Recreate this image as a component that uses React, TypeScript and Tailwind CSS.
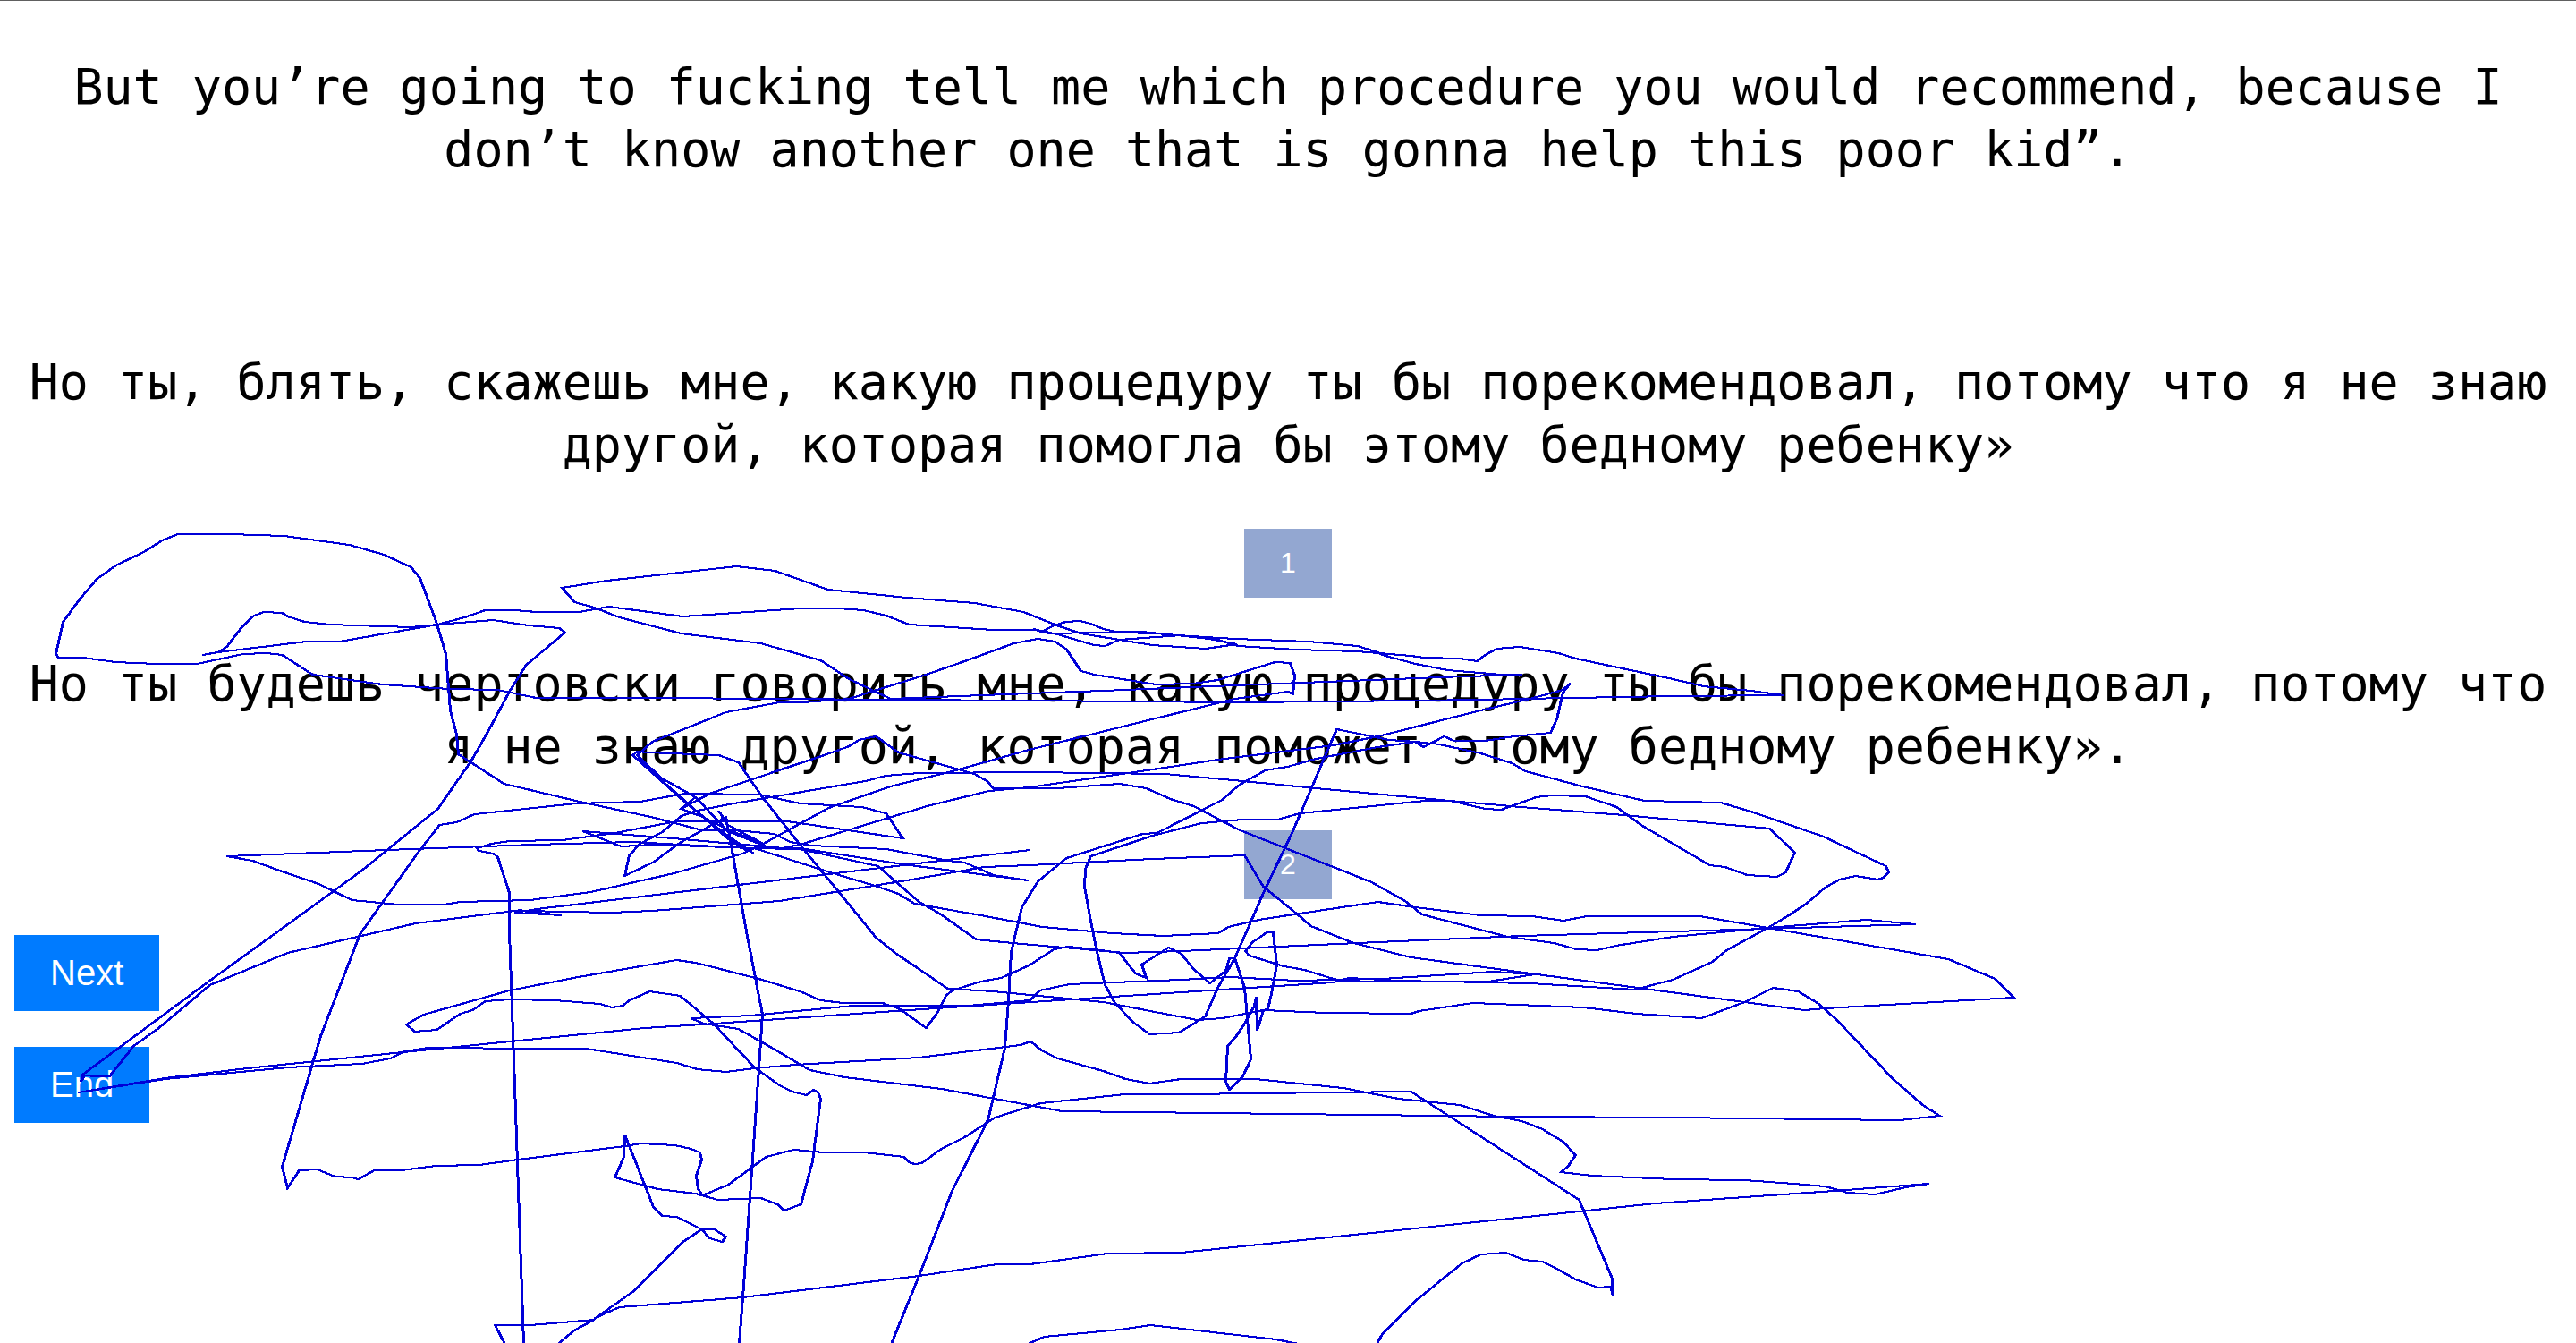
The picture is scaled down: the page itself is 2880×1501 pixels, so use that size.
const STROKES: string[] = [
  "226,731 243,728 342,716 379,716 489,697 519,689 542,681 574,681 600,683 647,683 680,677 763,688 894,679 937,679 965,681 990,687 1016,697 1110,703 1158,703 1173,707 1223,706 1276,705 1315,709 1347,711 1380,713 1462,716 1517,721 1540,728 1545,731 1582,741 1618,748 1678,753 1701,753 1609,756 1380,765 1233,771 1150,774 995,780 949,758 917,737 850,718 761,707 692,689 664,678 642,672 628,656 678,648 823,632 866,637 925,658 1013,667 1089,673 1144,683 1181,698 1208,707 1257,715 1288,720 1347,724 1382,719 1352,713 1320,709 1251,714 1235,721 1223,720 1182,708 1159,703",
  "1155,702 1164,705 1178,698 1191,694 1207,693 1219,696 1233,702 1251,706 1292,707 1315,709 1361,714 1384,721 1448,725 1517,727 1577,732 1591,734 1632,735 1651,738 1660,731 1673,724 1699,722 1742,729 1761,735 1870,758 1904,766 1957,771 1994,776 1870,777 1700,780 1660,781 1494,783 1380,784 1150,782 995,781 870,780 720,779 599,779 556,770 501,769 427,764 349,753 315,731 298,729 271,730 220,741 174,741 129,739 92,734 65,734 62,730 70,694 90,667 108,646 129,631 160,616 181,603 198,596 257,596 317,598 390,608 429,619 459,633 469,645 487,693 498,730 503,793 510,820 512,842 563,875 643,894 727,912 785,927 823,927 865,931 883,940 907,944 990,948 1060,961 1078,963 1110,977 1149,983",
  "1149,983 1009,965 894,947 876,947 752,936 651,928 694,945 729,943 841,947 894,948 981,967 1027,1007 1050,1020 1091,1049 1142,1054 1224,1061 1256,1064 1320,1062 1517,1053 1701,1045 1870,1040 1976,1037 2141,1032 2086,1027 1976,1036 1870,1046 1806,1056 1785,1061 1762,1060 1737,1053 1685,1046 1589,1021 1572,1007 1533,985 1490,968 1386,927 1334,900 1308,892 1281,880 1251,875 1182,880 1110,880 1103,872 1089,864 1068,858 1036,849 1004,840 979,822 960,826 949,833 921,843 876,858 793,886 761,903 785,912 813,926 840,937 852,943",
  "777,890 761,903",
  "842,953 813,933 767,897 707,843 712,839 723,840 803,843 825,851 852,890 897,947 957,1020 979,1047 1003,1066 1027,1082 1059,1104 1110,1107 1233,1119 1338,1139 1366,1137 1412,1128 1481,1131 1577,1132 1586,1129 1646,1120 1770,1125 1829,1132 1902,1137 1950,1119 1982,1103 2010,1107 2033,1121 2054,1140 2115,1204 2149,1234 2168,1246 2124,1251 2035,1250 1870,1248 1692,1247 1187,1241 1052,1216 944,1203 905,1195 857,1167 825,1149 786,1143 772,1137 839,1134 954,1123 1082,1123 1151,1117 1162,1106 1195,1099 1320,1094 1375,1091 1448,1095 1545,1093 1669,1085 1715,1088 1664,1096 1508,1096 1490,1093 1458,1083 1435,1079 1396,1067 1392,1062 1400,1052 1416,1041 1423,1041 1427,1077 1421,1110 1417,1127 1412,1128 1405,1151 1404,1113 1402,1123 1391,1143 1381,1158 1372,1168 1370,1208 1374,1217 1389,1202 1398,1183 1391,1103 1380,1070 1374,1070 1370,1084 1352,1098 1334,1082 1320,1065 1306,1058 1276,1077 1281,1092 1269,1087 1251,1064 1224,1060 1194,1057 1178,1060 1150,1078 1119,1092 1096,1096 1064,1106 1057,1112 1048,1130 1035,1148 1006,1127 986,1120 942,1120 917,1117 894,1107 848,1093 777,1075 756,1072 646,1091 600,1100 569,1106 473,1133 454,1144 463,1152 488,1150 514,1132 528,1128 542,1118 569,1116 620,1117 670,1121 684,1125 696,1123 703,1117 726,1107 760,1112 797,1143 843,1192 871,1212 885,1219 901,1223 909,1217 914,1220 917,1227 908,1297 895,1345 876,1352 869,1345 850,1338 802,1340 777,1333 735,1328 687,1315 697,1292 698,1267 730,1348 740,1358 756,1359 784,1373 793,1383 807,1387 811,1381 798,1373 784,1373 763,1387 708,1442 664,1473 676,1467 692,1460 830,1449 1027,1425 1114,1412 1151,1412 1238,1400 1320,1399 1765,1353 1850,1344 2050,1330 2156,1322 2130,1326 2096,1334 2065,1332 2040,1325 2005,1322 1950,1318 1870,1317 1779,1313 1745,1309 1753,1302 1761,1290 1747,1275 1724,1261 1701,1252 1669,1246 1632,1234 1563,1227 1501,1215 1403,1205 1320,1205 1285,1210 1258,1205 1233,1196 1182,1182 1164,1173 1152,1163 1140,1167 1027,1181 889,1189 843,1193 811,1197 779,1194 756,1187 655,1171 600,1171 478,1170 452,1174 436,1182 404,1188 321,1192 184,1205 87,1220 184,1204 276,1193 450,1175 720,1148 784,1144 1000,1129 1320,1108 1490,1097 1508,1092 1563,1095 1710,1098 1827,1105 1870,1094 1914,1074 1930,1061 1976,1036 1998,1023 2019,1009 2040,991 2056,982 2074,978 2099,982 2105,980 2111,974 2108,967 2038,934 1957,906 1923,896 1838,894 1769,878 1705,861 1690,852 1655,841 1609,831 1582,828 1540,834 1471,847 1439,856 1414,860 1384,877 1366,893 1293,930 1277,931 1192,958 1160,984 1142,1013 1130,1063 1127,1117 1123,1170 1105,1247 1101,1257 1064,1330 1027,1425 996,1501",
  "1755,763 1747,770 1710,780 1655,793 1540,822 1490,832 1361,848 1302,857 1150,879 1105,883 1036,900 894,943 868,948 853,944 813,928 803,917 777,890 738,868 712,843 729,828 811,795 871,784 898,784 949,780 977,771 1032,754 1078,738 1133,718 1160,713 1179,716 1192,725 1208,749 1223,753 1292,764 1334,763 1361,759 1425,739 1442,740 1447,754 1445,775 1440,772 1380,780 1352,787 1150,837 1068,860 995,878 926,902 853,942 830,953 753,975 660,996 592,1005 514,1007 496,1010 445,1010 393,1005 356,987 312,972 282,961 253,956 432,949 597,943 707,940 760,943 843,947 921,972 981,990 1004,998 1022,1009 1096,1022 1165,1035 1243,1042 1300,1045 1361,1042 1373,1035 1407,1027 1453,1020 1540,1007 1582,1013 1655,1022 1713,1023 1747,1028 1774,1023 1900,1023 1976,1036 2178,1071 2230,1093 2251,1114 2040,1126 2017,1128 1950,1119 1718,1088 1577,1069 1513,1053 1465,1034 1449,1020 1412,990 1391,955 1288,959 1150,966 1100,968 1013,983 871,1006 729,1017 683,1019 583,1017 627,1022 575,1019 600,1015 1151,949",
  "583,1016 464,1031 321,1064 234,1100 177,1148 149,1168 122,1202 108,1202 94,1201 90,1208 92,1200 230,1098 338,1020 404,972 489,903 526,850 546,815 569,772 588,742 631,706 625,701 590,698 551,692 489,697 459,700 367,697 340,694 321,688 315,684 294,683 282,688 269,701 253,722 243,728",
  "707,843 813,936 835,950",
  "803,905 813,921 853,942",
  "585,1501 569,1040 569,997 556,957 551,953 535,950 533,947 549,942 569,939 628,938 687,930 756,917 880,917 1009,936 990,908 963,901 894,897 848,887 765,886 715,895 643,897 530,909 510,918 491,921 466,953 402,1043 358,1157 315,1303 321,1327 334,1307 354,1306 374,1314 393,1315 400,1317 418,1307 448,1307 487,1302 535,1301 579,1295 698,1280 716,1277 754,1279 772,1283 782,1287 784,1295 778,1313 780,1328 785,1335 814,1323 856,1292 887,1284 921,1287 965,1287 1010,1292 1016,1298 1022,1300 1030,1299 1052,1283 1078,1270 1112,1248 1163,1232 1257,1222 1320,1222 1577,1219 1765,1340 1802,1428 1803,1447 1800,1437 1786,1438 1761,1429 1742,1418 1724,1409 1703,1407 1683,1399 1655,1401 1634,1411 1582,1453 1545,1490 1539,1501",
  "1755,763 1747,773 1740,803 1733,818 1692,822 1660,827 1625,827 1614,822 1591,834 1582,828 1552,826 1494,814 1487,830 1467,877 1444,930 1412,997 1402,1020 1380,1070 1361,1103 1347,1135 1318,1153 1285,1155 1267,1142 1246,1120 1235,1100 1226,1063 1218,1023 1212,990 1213,970 1219,956 1288,933 1343,919 1389,915 1428,915 1453,908 1593,894 1621,894 1660,903 1678,904 1717,890 1735,888 1772,889 1807,901 1834,921 1870,942 1911,966 1928,968 1953,977 1986,979 1996,974 2006,952 1978,925 1815,910 1700,901 1609,893 1471,880 1389,872 1302,864 1150,862 1027,863 990,866 967,872 820,897 779,905 761,911 740,929 715,942 703,955 698,978 731,962 758,942 811,912 814,927 834,1040 852,1133 848,1193 838,1337 830,1449 826,1501",
  "1149,1501 1167,1493 1252,1485 1286,1480 1426,1496 1451,1501",
  "564,1501 553,1480 592,1480 664,1474 643,1485 634,1492 624,1501",
];

function Sentence({ children }: { children: string }) {
  return (
    <p className="text-center font-['DejaVu_Sans_Mono',monospace] text-[55px] leading-[70px] text-black">
      {children}
    </p>
  );
}

function ChoiceButton({ label }: { label: string }) {
  return (
    <button
      type="button"
      className="bg-[#93a7d1] px-10 py-5 text-[32px] leading-[37px] text-white"
    >
      {label}
    </button>
  );
}

function ActionButton({ label }: { label: string }) {
  return (
    <button
      type="button"
      className="bg-[#007bff] px-10 py-5 text-[40px] leading-[45px] text-white"
    >
      {label}
    </button>
  );
}

function StrokeSet() {
  return (
    <>
      {STROKES.map((points, index) => (
        <polyline key={index} points={points} />
      ))}
    </>
  );
}

// The pen nib is wider than it is tall, so steep strokes come out heavier.
function Scribble() {
  return (
    <svg
      className="pointer-events-none absolute top-0 left-0"
      width="2880"
      height="1501"
      viewBox="0 0 2880 1501"
      fill="none"
      stroke="#0000d8"
      strokeWidth="2"
      shapeRendering="crispEdges"
      aria-hidden="true"
    >
      <StrokeSet />
      <g transform="translate(1 0)">
        <StrokeSet />
      </g>
    </svg>
  );
}

export default function App() {
  return (
    <main className="relative min-h-screen overflow-hidden border-t border-[#606060] bg-white px-4 pt-[61px] font-['Liberation_Sans',Arial,sans-serif]">
      <Sentence>
        But you’re going to fucking tell me which procedure you would recommend, because I don’t know another one that is gonna help this poor kid”.
      </Sentence>

      <section className="mt-[190px] flex flex-col items-center gap-[59px]">
        <Sentence>
          Но ты, блять, скажешь мне, какую процедуру ты бы порекомендовал, потому что я не знаю другой, которая помогла бы этому бедному ребенку»
        </Sentence>
        <ChoiceButton label="1" />
      </section>

      <section className="mt-[61px] flex flex-col items-center gap-[59px]">
        <Sentence>
          Но ты будешь чертовски говорить мне, какую процедуру ты бы порекомендовал, потому что я не знаю другой, которая поможет этому бедному ребенку».
        </Sentence>
        <ChoiceButton label="2" />
      </section>

      <nav className="mt-10 flex flex-col items-start gap-10">
        <ActionButton label="Next" />
        <ActionButton label="End" />
      </nav>

      <Scribble />
    </main>
  );
}
